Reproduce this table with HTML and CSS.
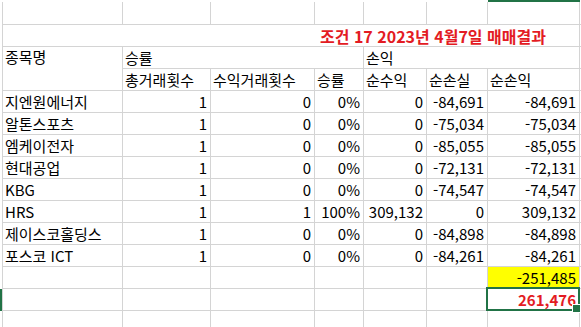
FILE: index.html
```html
<!DOCTYPE html>
<html lang="ko">
<head>
<meta charset="utf-8">
<title>매매결과</title>
<link rel="stylesheet" href="styles.css">
</head>
<body>
<div class="sheet">
  <!-- column header edge -->
  <div class="m"></div><div class="s"></div><div class="s"></div><div class="s"></div><div class="s"></div><div class="s"></div><div class="s"></div><div class="s active"></div><div class="s"></div>

  <!-- row 1 -->
  <div class="m"></div><div class="c a"></div><div class="c"></div><div class="c"></div><div class="c"></div><div class="c"></div><div class="c"></div><div class="c"></div><div class="c h"></div>

  <!-- title row -->
  <div class="m"></div><div class="c a title">조건 17 2023년 4월7일 매매결과</div><div class="c h"></div>

  <!-- header row 1 -->
  <div class="m"></div>
  <div class="c a top span-r">종목명</div>
  <div class="c span3">승률</div>
  <div class="c span3">손익</div>
  <div class="c h"></div>

  <!-- header row 2 -->
  <div class="m"></div>
  <div class="c">총거래횟수</div>
  <div class="c">수익거래횟수</div>
  <div class="c">승률</div>
  <div class="c">순수익</div>
  <div class="c">순손실</div>
  <div class="c">순손익</div>
  <div class="c h"></div>

  <!-- data -->
  <div class="m"></div><div class="c a">지엔원에너지</div><div class="c n">1</div><div class="c n">0</div><div class="c n">0%</div><div class="c n">0</div><div class="c n">-84,691</div><div class="c n">-84,691</div><div class="c h"></div>
  <div class="m"></div><div class="c a">알톤스포츠</div><div class="c n">1</div><div class="c n">0</div><div class="c n">0%</div><div class="c n">0</div><div class="c n">-75,034</div><div class="c n">-75,034</div><div class="c h"></div>
  <div class="m"></div><div class="c a">엠케이전자</div><div class="c n">1</div><div class="c n">0</div><div class="c n">0%</div><div class="c n">0</div><div class="c n">-85,055</div><div class="c n">-85,055</div><div class="c h"></div>
  <div class="m"></div><div class="c a">현대공업</div><div class="c n">1</div><div class="c n">0</div><div class="c n">0%</div><div class="c n">0</div><div class="c n">-72,131</div><div class="c n">-72,131</div><div class="c h"></div>
  <div class="m"></div><div class="c a">KBG</div><div class="c n">1</div><div class="c n">0</div><div class="c n">0%</div><div class="c n">0</div><div class="c n">-74,547</div><div class="c n">-74,547</div><div class="c h"></div>
  <div class="m"></div><div class="c a">HRS</div><div class="c n">1</div><div class="c n">1</div><div class="c n">100%</div><div class="c n">309,132</div><div class="c n">0</div><div class="c n">309,132</div><div class="c h"></div>
  <div class="m"></div><div class="c a">제이스코홀딩스</div><div class="c n">1</div><div class="c n">0</div><div class="c n">0%</div><div class="c n">0</div><div class="c n">-84,898</div><div class="c n">-84,898</div><div class="c h"></div>
  <div class="m"></div><div class="c a">포스코 ICT</div><div class="c n">1</div><div class="c n">0</div><div class="c n">0%</div><div class="c n">0</div><div class="c n">-84,261</div><div class="c n">-84,261</div><div class="c h"></div>

  <!-- sum row -->
  <div class="m"></div><div class="c a"></div><div class="c"></div><div class="c"></div><div class="c"></div><div class="c"></div><div class="c"></div><div class="c n sum">-251,485</div><div class="c h"></div>

  <!-- total row (selected) -->
  <div class="m active"></div><div class="c a"></div><div class="c"></div><div class="c"></div><div class="c"></div><div class="c"></div><div class="c"></div><div class="c n total">261,476</div><div class="c h"></div>

  <!-- trailing row -->
  <div class="m"></div><div class="c a"></div><div class="c"></div><div class="c"></div><div class="c"></div><div class="c"></div><div class="c"></div><div class="c"></div><div class="c h"></div>
</div>
</body>
</html>
```

FILE: styles.css
```css
* {
  box-sizing: border-box;
}

html,
body {
  margin: 0;
  background: #ffffff;
}

body {
  font-family: "Noto Sans CJK KR", sans-serif;
  font-size: 15px;
  font-weight: 400;
  line-height: 20px;
  color: #000000;
  overflow: hidden;
}

.sheet {
  display: grid;
  grid-template-columns: 2px 121px 88px 104px 49px 63px 61px 92px 1fr;
  grid-template-rows: 2px 23px repeat(14, 22px);
}

.m,
.s {
  background: #ffffff;
}

.active {
  background: #217346;
}

.c {
  display: flex;
  align-items: center;
  padding: 0 2px;
  white-space: nowrap;
  overflow: hidden;
  border-right: 1px solid #d4d4d4;
  border-bottom: 1px solid #d4d4d4;
}

.a {
  border-left: 1px solid #d4d4d4;
}

.h {
  border-right: 0;
}

.n {
  justify-content: flex-end;
  padding-right: 3px;
}

.title {
  grid-column: span 7;
  padding-left: 317px;
  font-size: 16px;
  font-weight: 700;
  color: #e31b23;
}

.span-r {
  grid-row: span 2;
}

.top {
  align-items: flex-start;
  padding-top: 0;
}

.span3 {
  grid-column: span 3;
}

.sum {
  background: #ffff00;
}

.total {
  position: relative;
  overflow: visible;
  font-weight: 700;
  color: #e31b23;
}

.total::after {
  content: "";
  position: absolute;
  left: -2px;
  top: -2px;
  right: -1px;
  bottom: -1px;
  border: 2px solid #217346;
}

.total::before {
  content: "";
  position: absolute;
  right: -2px;
  bottom: -3px;
  width: 7px;
  height: 7px;
  background: #217346;
  border: 1px solid #ffffff;
  z-index: 1;
}
```
